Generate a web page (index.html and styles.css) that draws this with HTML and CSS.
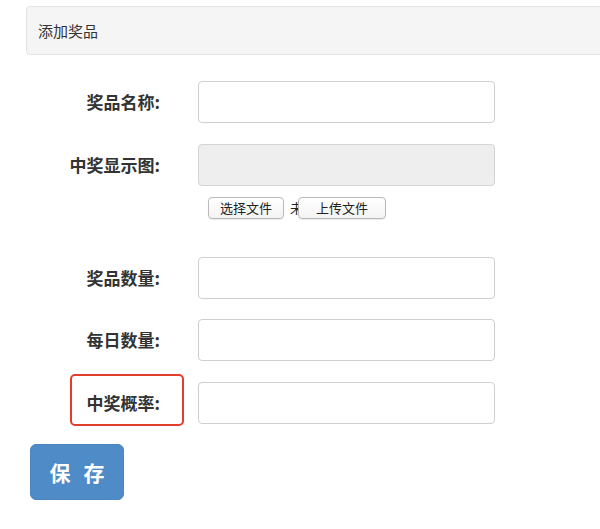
FILE: index.html
```html
<!DOCTYPE html>
<html lang="zh-CN">
<head>
<meta charset="utf-8">
<title>添加奖品</title>
<link rel="stylesheet" href="styles.css">
</head>
<body>
<div class="page">
  <div class="panel-heading">添加奖品</div>
  <form class="form">
    <div class="row">
      <label class="label">奖品名称:</label>
      <input class="input" type="text">
    </div>
    <div class="row row-img">
      <label class="label">中奖显示图:</label>
      <input class="input" type="text" disabled>
    </div>
    <div class="file-row">
      <span class="btn-file">选择文件</span>
      <span class="file-none">未选择任何文件</span>
      <span class="btn-upload">上传文件</span>
    </div>
    <div class="row row-count">
      <label class="label">奖品数量:</label>
      <input class="input" type="text">
    </div>
    <div class="row">
      <label class="label">每日数量:</label>
      <input class="input" type="text">
    </div>
    <div class="row">
      <label class="label"><span class="mark">中奖概率:</span></label>
      <input class="input" type="text">
    </div>
    <button class="btn-save" type="button">保 存</button>
  </form>
</div>
</body>
</html>
```
FILE: styles.css
```css
html, body {
  margin: 0;
  padding: 0;
  background: #fff;
  overflow: hidden;
}
body {
  font-family: "Noto Sans CJK SC", "Noto Sans", "Liberation Sans", sans-serif;
  color: #333;
}
.page {
  padding-top: 6px;
}
.panel-heading {
  margin-left: 26px;
  margin-right: -6px;
  height: 47px;
  box-sizing: content-box;
  border: 1px solid #e3e3e3;
  border-radius: 4px;
  background: #f5f5f5;
  display: flex;
  align-items: center;
  padding-left: 11px;
  font-size: 15px;
  color: #333;
}
.form {
  margin: 26px 0 0 0;
  display: flex;
  flex-direction: column;
  align-items: flex-start;
}
.row {
  display: flex;
  align-items: center;
  margin-bottom: 20.5px;
}
.row-img {
  margin-bottom: 0;
}
.row-count {
  margin-top: 38px;
}
.label {
  width: 160px;
  text-align: right;
  font-size: 17px;
  font-weight: bold;
  line-height: 24px;
  color: #333;
}
.mark {
  position: relative;
  display: inline-block;
}
.mark::after {
  content: "";
  position: absolute;
  left: -16px;
  right: -24px;
  top: -17px;
  bottom: -11px;
  border: 2px solid #e43d2c;
  border-radius: 5px;
}
.input {
  margin: 0 0 0 38px;
  width: 297px;
  height: 42px;
  box-sizing: border-box;
  border: 1px solid #cfcfcf;
  border-radius: 4px;
  background: #fff;
  padding: 0 10px;
  font-family: inherit;
}
.input:disabled {
  background: #eeeeee;
  border-color: #d4d4d4;
}
.file-row {
  margin-top: 11px;
  padding-left: 208px;
  display: flex;
  align-items: center;
  height: 22px;
}
.btn-file, .btn-upload {
  display: inline-flex;
  align-items: center;
  justify-content: center;
  height: 22px;
  box-sizing: border-box;
  border: 1px solid #b9b9b9;
  border-radius: 4px;
  background: linear-gradient(#ffffff, #f3f3f3);
  font-size: 13px;
  color: #222;
  box-shadow: 0 1px 1px rgba(0,0,0,0.08);
}
.btn-file {
  width: 76px;
}
.file-none {
  display: inline-block;
  width: 8px;
  margin-left: 6px;
  overflow: hidden;
  white-space: nowrap;
  font-size: 13px;
  color: #222;
}
.btn-upload {
  width: 88px;
  margin-left: 0;
}
.btn-save {
  margin: 0 0 0 30px;
  width: 94px;
  height: 56px;
  border: 1px solid #4a85c0;
  border-radius: 6px;
  background: #4f8bc7;
  color: #fff;
  font-family: inherit;
  font-size: 21px;
  font-weight: bold;
  letter-spacing: 4px;
  padding: 0 0 0 4px;
}
```
